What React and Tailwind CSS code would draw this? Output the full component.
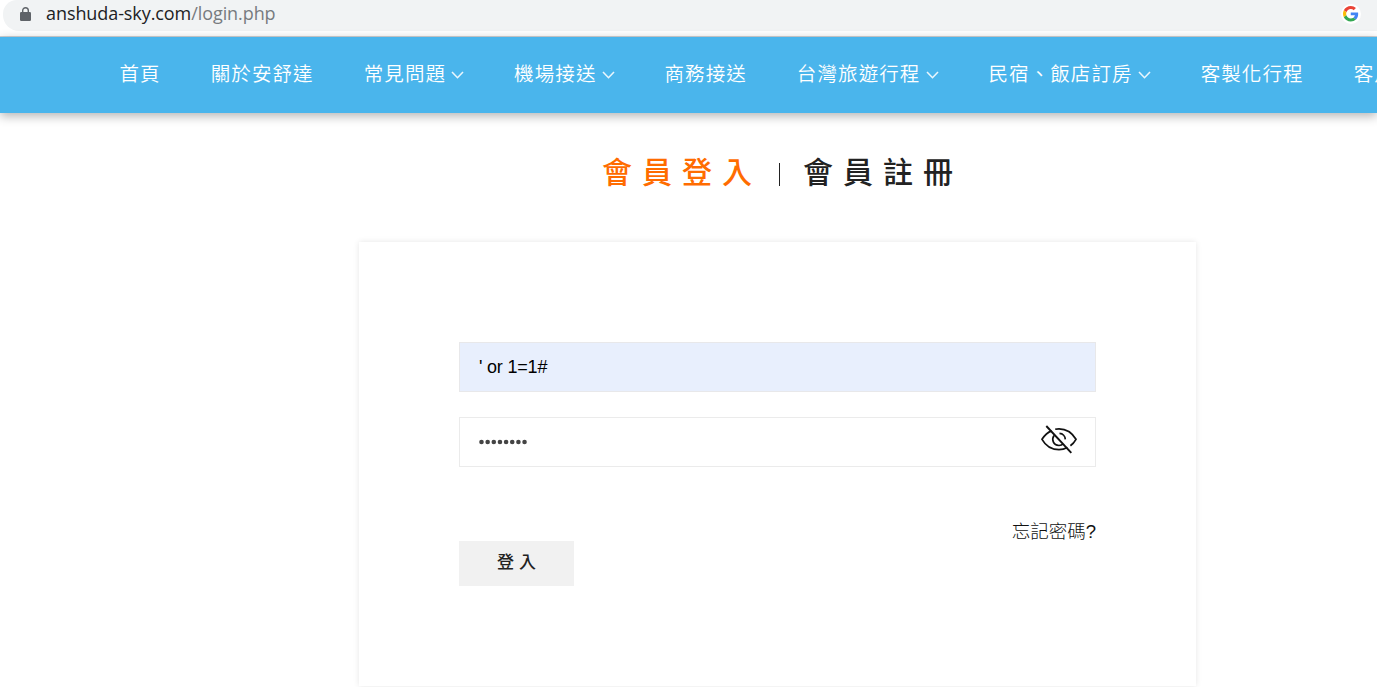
import React from "react";

const NAV = [
  { label: "首頁" },
  { label: "關於安舒達" },
  { label: "常見問題", menu: true },
  { label: "機場接送", menu: true },
  { label: "商務接送" },
  { label: "台灣旅遊行程", menu: true },
  { label: "民宿、飯店訂房", menu: true },
  { label: "客製化行程" },
  { label: "客戶" },
];

function LockIcon() {
  return (
    <svg className="h-[14px] w-[11px] shrink-0" viewBox="0 0 11 14" fill="none">
      <rect x="0" y="5" width="11" height="9" rx="1.2" fill="#5f6368" />
      <path d="M2.7 5.5V3.5a2.8 2.8 0 0 1 5.6 0v2" stroke="#5f6368" strokeWidth="1.4" />
    </svg>
  );
}

function GoogleMark() {
  return (
    <span className="flex size-5 shrink-0 items-center justify-center rounded-full bg-white">
      <svg className="size-[15.5px]" viewBox="0 0 48 48">
        <path fill="#EA4335" d="M24 9.5c3.54 0 6.71 1.22 9.21 3.6l6.85-6.85C35.9 2.38 30.47 0 24 0 14.62 0 6.51 5.38 2.56 13.22l7.98 6.19C12.43 13.72 17.74 9.5 24 9.5z" />
        <path fill="#4285F4" d="M46.98 24.55c0-1.57-.15-3.09-.38-4.55H24v9.02h12.94c-.58 2.96-2.26 5.48-4.78 7.18l7.73 6c4.51-4.18 7.09-10.36 7.09-17.65z" />
        <path fill="#FBBC05" d="M10.53 28.59A14.5 14.5 0 0 1 9.77 24c0-1.6.27-3.14.76-4.59l-7.98-6.19A23.9 23.9 0 0 0 0 24c0 3.88.92 7.54 2.56 10.78l7.97-6.19z" />
        <path fill="#34A853" d="M24 48c6.48 0 11.93-2.13 15.89-5.81l-7.73-6c-2.15 1.45-4.92 2.3-8.16 2.3-6.26 0-11.57-4.22-13.47-9.91l-7.98 6.19C6.51 42.62 14.62 48 24 48z" />
      </svg>
    </span>
  );
}

function Chevron() {
  return (
    <svg className="mt-[3px] ml-[5px] h-2 w-[13px] shrink-0" viewBox="0 0 13 8" fill="none">
      <path d="M1 1l5.5 5.7L12 1" stroke="#e9f6fd" strokeWidth="1.6" />
    </svg>
  );
}

function EyeOff() {
  return (
    <svg className="h-[30px] w-9" viewBox="0 0 36 30" fill="none" stroke="#111" strokeWidth="1.7">
      <path d="M10.6 5.9C6.9 7.3 3.4 10.6 1 14.3c3.5 6.2 9.8 10.3 17 10.3 3 0 5.9-.8 8.4-2.1" />
      <path d="M14.2 4.2c1.2-.3 2.5-.4 3.8-.4 7.200 0 13.400 4.300 17 10.500-1.400 2.500-3.200 4.700-5.600 6.500" />
      <path d="M13 10.500c-2.600 3.800-.9 10 5 10 1.700 0 3.200-.6 4.300-1.600" />
      <path d="M18.500 8.400c3.300.2 5.700 2.700 5.800 6" />
      <path d="M5.300 1L30.300 27.800" strokeWidth="1.9" />
    </svg>
  );
}

export default function App() {
  return (
    <div className="flex h-[687px] w-full flex-col overflow-hidden bg-white font-['Liberation_Sans','Noto_Sans_CJK_TC',sans-serif]">
      <div className="flex h-[37px] shrink-0 flex-col border-b border-[#cfd1d3] bg-white pl-[3px]">
        <div className="flex h-[31px] items-center rounded-bl-[16px] rounded-tl-[14px] bg-[#f1f3f4] pr-4 pb-[3px] pl-[17px]">
          <LockIcon />
          <span className="ml-[15px] flex-1 pb-[2px] font-['Open_Sans',sans-serif] text-[18px] leading-6 tracking-[-0.08px] text-[#202124]">
            anshuda-sky.com<span className="text-[#777b7f]">/login.php</span>
          </span>
          <GoogleMark />
        </div>
      </div>

      <nav className="relative z-10 flex h-[76px] shrink-0 items-center gap-[49.9px] bg-[#4ab5ec] pb-[3px] pl-[119.5px] shadow-[0_3px_10px_rgba(0,0,0,0.3)]">
        {NAV.map((item) => (
          <a key={item.label} className="flex shrink-0 items-center text-[19.5px] leading-7 font-[350] tracking-[1.12px] whitespace-nowrap text-white">
            {item.label}
            {item.menu && <Chevron />}
          </a>
        ))}
      </nav>

      <main className="flex flex-1 flex-col">
        <div className="flex h-[129px] shrink-0 items-center pb-[10px] pl-[602px] text-[30px] font-medium tracking-[10px]">
          <a className="w-[177px] text-[#ff6c00]">會員登入</a>
          <span className="mt-[3px] h-[23px] w-px bg-[#222]" />
          <a className="ml-[23px] text-[#222]">會員註冊</a>
        </div>

        <form className="ml-[359px] flex h-[444px] w-[837px] shrink-0 flex-col px-[100px] pt-[100px] shadow-[0_0_6px_rgba(0,0,0,0.1)]">
          <div className="flex h-[50px] shrink-0 items-center border border-[#e8e8ea] bg-[#e8effd] px-[19px] text-[18px] tracking-[-0.2px] text-black">
            ' or 1=1#
          </div>
          <div className="mt-[25px] flex h-[50px] shrink-0 items-center justify-between border border-[#ebebeb] pr-[18px] pl-[19px]">
            <svg className="h-[6px] w-[50px]" viewBox="0 0 50 6" fill="#444">
              {Array.from({ length: 8 }, (_, i) => (
                <circle key={i} cx={2.5 + i * 6.15} cy="3" r="2.3" />
              ))}
            </svg>
            <span className="pb-1"><EyeOff /></span>
          </div>
          <div className="mt-[50px] flex justify-between">
            <button type="button" className="mt-6 h-[45px] w-[115px] bg-[#f1f1f1] pb-px pl-[5px] text-[17px] font-medium tracking-[5px] text-[#222]">
              登入
            </button>
            <a className="pt-px text-[18.5px] leading-7 font-light text-[#111]">忘記密碼?</a>
          </div>
        </form>
      </main>
    </div>
  );
}
